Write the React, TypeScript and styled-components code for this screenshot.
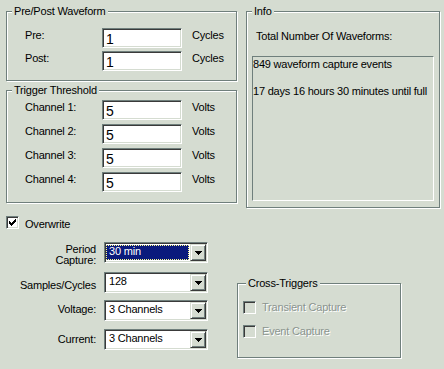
import React from "react";
import styled, { createGlobalStyle, css } from "styled-components";

const BG = "#d5dcd1";
const SHADOW = "#6f7f7c";
const DARK = "#3a3a3a";
const NAVY = "#0a1a7c";

const Global = createGlobalStyle`
  html, body { margin: 0; padding: 0; background: ${BG}; }
  body {
    font-family: "Liberation Sans", Arial, sans-serif;
    font-size: 11px;
    color: #000;
  }
`;

const Page = styled.div`
  width: 444px;
  height: 369px;
  box-sizing: border-box;
  padding: 11px 4px 0 6px;
  background: ${BG};
  overflow: hidden;
  letter-spacing: -0.2px;
  line-height: 13px;
`;

const TopRow = styled.div`
  display: grid;
  grid-template-columns: 231px 194px;
  column-gap: 9px;
  align-items: start;
`;

const LeftCol = styled.div`
  display: flex;
  flex-direction: column;
  gap: 9px;
`;

const GroupBox = styled.div<{ $h: number; $pt: number; $pl: number; $pr?: number }>`
  position: relative;
  box-sizing: border-box;
  height: ${(p) => p.$h}px;
  border: 1px solid ${SHADOW};
  box-shadow: inset 1px 1px 0 #fff, 1px 1px 0 #fff;
  padding: ${(p) => p.$pt}px ${(p) => p.$pr ?? 0}px 0 ${(p) => p.$pl}px;
`;

const GroupTitle = styled.span<{ $left: number }>`
  position: absolute;
  top: -7px;
  left: ${(p) => p.$left}px;
  padding: 0 2px;
  background: ${BG};
  line-height: 13px;
  white-space: nowrap;
`;

const FieldGrid = styled.div<{ $gap: number }>`
  display: grid;
  grid-template-columns: 67px 80px auto;
  column-gap: 10px;
  row-gap: ${(p) => p.$gap}px;
  align-items: start;
`;

const FieldLabel = styled.span`
  margin-top: 1px;
  white-space: nowrap;
`;

const TextInput = styled.input`
  box-sizing: border-box;
  width: 80px;
  height: 20px;
  margin: 0;
  padding: 1px 0 0 3px;
  background: #fff;
  border: 1px solid;
  border-color: ${SHADOW} #fff #fff ${SHADOW};
  box-shadow: inset 1px 1px 0 ${DARK}, inset -1px -1px 0 ${BG};
  font-family: "Liberation Sans", Arial, sans-serif;
  font-size: 14px;
  line-height: 16px;
  color: #000;
  outline: none;
`;

const InfoHeading = styled.div`
  margin-left: 4px;
  white-space: nowrap;
`;

const ListBox = styled.div`
  box-sizing: border-box;
  height: 145px;
  margin-top: 13px;
  padding-top: 1px;
  border: 1px solid;
  border-color: ${SHADOW} #fff #fff ${SHADOW};
  white-space: nowrap;
  overflow: hidden;
`;

const ListLine = styled.div<{ $mt?: number }>`
  margin-top: ${(p) => p.$mt ?? 0}px;
`;

const CheckRow = styled.label`
  display: flex;
  align-items: center;
  gap: 6px;
  height: 13px;
  white-space: nowrap;
`;

const OverwriteRow = styled(CheckRow)`
  margin-top: 8px;
  & > span:last-child {
    margin-top: 3px;
  }
`;

const CheckBox = styled.span<{ $disabled?: boolean }>`
  box-sizing: border-box;
  width: 13px;
  height: 13px;
  flex: none;
  display: flex;
  align-items: center;
  justify-content: center;
  background: ${(p) => (p.$disabled ? BG : "#fff")};
  border: 1px solid;
  border-color: ${SHADOW} #fff #fff ${SHADOW};
  box-shadow: inset 1px 1px 0 ${DARK}, inset -1px -1px 0 ${BG};
`;

const DisabledText = styled.span`
  color: #8a948f;
  text-shadow: 1px 1px 0 #fff;
`;

const BottomRow = styled.div`
  display: grid;
  grid-template-columns: 231px 164px;
  align-items: start;
  margin-top: 13px;
`;

const SelectForm = styled.div`
  display: flex;
  flex-direction: column;
`;

const SelectRow = styled.div<{ $mt: number }>`
  display: grid;
  grid-template-columns: 90px 104px;
  column-gap: 8px;
  align-items: start;
  margin-top: ${(p) => p.$mt}px;
`;

const SelectLabel = styled.div<{ $top: number; $lh?: number }>`
  text-align: right;
  margin-top: ${(p) => p.$top}px;
  line-height: ${(p) => p.$lh ?? 13}px;
  white-space: nowrap;
`;

const Combo = styled.div`
  box-sizing: border-box;
  width: 104px;
  height: 21px;
  display: flex;
  align-items: stretch;
  padding: 1px;
  background: #fff;
  border: 1px solid;
  border-color: ${SHADOW} #fff #fff ${SHADOW};
  box-shadow: inset 1px 1px 0 ${DARK}, inset -1px -1px 0 ${BG};
`;

const ComboText = styled.div<{ $selected?: boolean }>`
  flex: 1;
  min-width: 0;
  padding-left: 3px;
  line-height: 15px;
  white-space: nowrap;
  overflow: hidden;
  ${(p) =>
    p.$selected &&
    css`
      margin: 1px 1px 1px 0;
      padding-left: 3px;
      line-height: 13px;
      background: ${NAVY};
      color: #fff;
      outline: 1px dotted #ffff90;
      outline-offset: -1px;
    `}
`;

const ComboButton = styled.div`
  box-sizing: border-box;
  width: 16px;
  flex: none;
  display: flex;
  align-items: center;
  justify-content: center;
  background: ${BG};
  border: 1px solid;
  border-color: ${BG} ${DARK} ${DARK} ${BG};
  box-shadow: inset 1px 1px 0 #fff, inset -1px -1px 0 ${SHADOW};
`;

const CrossGroup = styled(GroupBox)`
  margin-top: 41px;
`;

const CrossList = styled.div`
  display: flex;
  flex-direction: column;
  gap: 11px;
`;

const Arrow = () => (
  <svg width="7" height="4" viewBox="0 0 7 4" shapeRendering="crispEdges">
    <polygon points="0,0 7,0 3.5,4" fill="#000" />
  </svg>
);

const CheckMark = () => (
  <svg width="7" height="7" viewBox="0 0 7 7" shapeRendering="crispEdges">
    <path
      d="M6 0h1v1h-1zM5 1h2v1h-2zM0 2h1v1h-1zM4 2h3v1h-3zM0 3h2v1h-2zM3 3h3v1h-3zM0 4h5v1h-5zM1 5h3v1h-3zM2 6h1v1h-1z"
      fill="#000"
    />
  </svg>
);

type ComboProps = { value: string; selected?: boolean };
const ComboBox = ({ value, selected }: ComboProps) => (
  <Combo>
    <ComboText $selected={selected}>{value}</ComboText>
    <ComboButton>
      <Arrow />
    </ComboButton>
  </Combo>
);

const channels = ["Channel 1:", "Channel 2:", "Channel 3:", "Channel 4:"];

export default function App() {
  return (
    <>
      <Global />
      <Page>
        <TopRow>
          <LeftCol>
            <GroupBox $h={70} $pt={16} $pl={18}>
              <GroupTitle $left={5}>Pre/Post Waveform</GroupTitle>
              <FieldGrid $gap={3}>
                <FieldLabel>Pre:</FieldLabel>
                <TextInput readOnly value="1" />
                <FieldLabel>Cycles</FieldLabel>
                <FieldLabel>Post:</FieldLabel>
                <TextInput readOnly value="1" />
                <FieldLabel>Cycles</FieldLabel>
              </FieldGrid>
            </GroupBox>
            <GroupBox $h={113} $pt={9} $pl={18}>
              <GroupTitle $left={5}>Trigger Threshold</GroupTitle>
              <FieldGrid $gap={4}>
                {channels.map((c) => (
                  <React.Fragment key={c}>
                    <FieldLabel>{c}</FieldLabel>
                    <TextInput readOnly value="5" />
                    <FieldLabel>Volts</FieldLabel>
                  </React.Fragment>
                ))}
              </FieldGrid>
            </GroupBox>
          </LeftCol>
          <GroupBox $h={197} $pt={18} $pl={5} $pr={5}>
            <GroupTitle $left={5}>Info</GroupTitle>
            <InfoHeading>Total Number Of Waveforms:</InfoHeading>
            <ListBox>
              <ListLine>849 waveform capture events</ListLine>
              <ListLine $mt={14}>17 days 16 hours 30 minutes until full</ListLine>
            </ListBox>
          </GroupBox>
        </TopRow>

        <OverwriteRow>
          <CheckBox>
            <CheckMark />
          </CheckBox>
          <span>Overwrite</span>
        </OverwriteRow>

        <BottomRow>
          <SelectForm>
            <SelectRow $mt={0}>
              <SelectLabel $top={2} $lh={11}>
                Period
                <br />
                Capture:
              </SelectLabel>
              <ComboBox value="30 min" selected />
            </SelectRow>
            <SelectRow $mt={6}>
              <SelectLabel $top={7}>Samples/Cycles</SelectLabel>
              <ComboBox value="128" />
            </SelectRow>
            <SelectRow $mt={7}>
              <SelectLabel $top={3}>Voltage:</SelectLabel>
              <ComboBox value="3 Channels" />
            </SelectRow>
            <SelectRow $mt={8}>
              <SelectLabel $top={4}>Current:</SelectLabel>
              <ComboBox value="3 Channels" />
            </SelectRow>
          </SelectForm>
          <CrossGroup $h={75} $pt={17} $pl={5}>
            <GroupTitle $left={8}>Cross-Triggers</GroupTitle>
            <CrossList>
              <CheckRow>
                <CheckBox $disabled />
                <DisabledText>Transient Capture</DisabledText>
              </CheckRow>
              <CheckRow>
                <CheckBox $disabled />
                <DisabledText>Event Capture</DisabledText>
              </CheckRow>
            </CrossList>
          </CrossGroup>
        </BottomRow>
      </Page>
    </>
  );
}
